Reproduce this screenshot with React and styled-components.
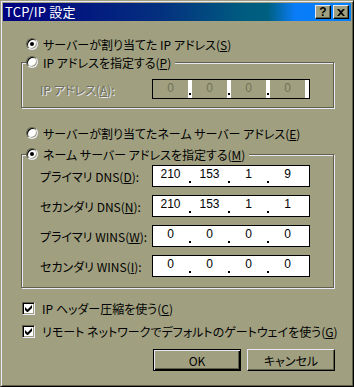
import React from 'react';
import styled, { createGlobalStyle, css } from 'styled-components';

const FACE = '#a0a080';
const LIGHT = '#e8e8f8';
const SHADOW = '#606048';
const DARK = '#000000';

const GlobalStyle = createGlobalStyle`
  html, body { margin: 0; padding: 0; background: ${FACE}; }
  body {
    font-family: "Noto Sans CJK JP", "Liberation Sans", sans-serif;
    font-size: 12px;
    color: #000;
  }
`;

const Window = styled.div`
  box-sizing: border-box;
  width: 354px;
  height: 387px;
  background: ${FACE};
  border: 1px solid;
  border-color: ${FACE} ${DARK} ${DARK} ${FACE};
  padding: 2px;
  box-shadow: inset 1px 1px 0 ${LIGHT}, inset -1px -1px 0 ${SHADOW};
  display: flex;
  flex-direction: column;
  font-feature-settings: "palt";
`;

const TitleBar = styled.div`
  height: 18px;
  flex: none;
  display: flex;
  align-items: center;
  padding: 0 2px 0 2px;
  background: linear-gradient(90deg, #000080 0%, #04307f 45%, #005a80 68%, #006080 76%, #0a7cf8 84%, #0080ff 100%);
`;

const Title = styled.span`
  flex: 1;
  color: #fff;
  font-size: 13px;
  line-height: 18px;
  letter-spacing: 0.2px;
`;

const CaptionButton = styled.span`
  box-sizing: border-box;
  width: 16px;
  height: 14px;
  margin-left: ${p => p.$gap || 0}px;
  background: ${FACE};
  border: 1px solid;
  border-color: ${LIGHT} ${DARK} ${DARK} ${LIGHT};
  box-shadow: inset -1px -1px 0 ${SHADOW};
  display: flex;
  align-items: center;
  justify-content: center;
  font-family: "Liberation Sans", sans-serif;
  font-weight: bold;
  font-size: 12px;
  line-height: 12px;
`;

const Body = styled.div`
  flex: 1;
  display: flex;
  flex-direction: column;
  padding: 0 16px 0 18px;
`;

const OptionRow = styled.label`
  display: flex;
  align-items: center;
  height: 16px;
  gap: ${p => p.$gap || 5}px;
  margin-top: ${p => p.$top || 0}px;
  margin-left: ${p => p.$left || 0}px;
  white-space: nowrap;
`;

const Radio = styled.span`
  box-sizing: border-box;
  position: relative;
  flex: none;
  width: 12px;
  height: 12px;
  border-radius: 50%;
  background: #fff;
  border: 1px solid;
  border-color: ${SHADOW} ${LIGHT} ${LIGHT} ${SHADOW};
  box-shadow: inset 1px 1px 0 ${DARK}, inset -1px -1px 0 ${FACE};
  &::after {
    content: '';
    display: ${p => (p.$checked ? 'block' : 'none')};
    position: absolute;
    left: 3px;
    top: 3px;
    width: 4px;
    height: 4px;
    border-radius: 50%;
    background: #000;
  }
`;

const Checkbox = styled.span`
  box-sizing: border-box;
  flex: none;
  width: 13px;
  height: 13px;
  background: #fff;
  border: 1px solid;
  border-color: ${SHADOW} ${LIGHT} ${LIGHT} ${SHADOW};
  box-shadow: inset 1px 1px 0 ${DARK}, inset -1px -1px 0 ${FACE};
  display: flex;
  align-items: center;
  justify-content: center;
`;

const Group = styled.div`
  box-sizing: border-box;
  position: relative;
  width: 313px;
  height: ${p => p.$height}px;
  margin-top: ${p => p.$top}px;
  border: 1px solid ${SHADOW};
  box-shadow: inset 1px 1px 0 ${LIGHT}, 1px 1px 0 ${LIGHT};
  display: flex;
  flex-direction: column;
  gap: 8px;
  padding: ${p => p.$pad} 0 0 18px;
`;

const Legend = styled.div`
  position: absolute;
  left: 4px;
  top: -9px;
  padding-right: 4px;
  background: ${FACE};
`;

const FieldRow = styled.div`
  display: flex;
  align-items: center;
  height: ${p => p.$h || 22}px;
`;

const FieldLabel = styled.span`
  width: 112px;
  flex: none;
  white-space: nowrap;
  ${p => p.$disabled && css`
    color: #707058;
    text-shadow: 1px 1px 0 ${LIGHT};
  `}
`;

const IPBox = styled.div`
  box-sizing: border-box;
  width: 158px;
  height: 100%;
  border: 1px solid #000;
  background: #fff;
  display: flex;
  padding-right: 4px;
`;

const Octet = styled.span`
  width: 35px;
  flex: none;
  text-align: center;
  line-height: 15px;
  padding-top: 1px;
  background: ${p => (p.$disabled ? FACE : '#fff')};
  color: ${p => (p.$disabled ? '#707058' : '#000')};
  font-family: "Liberation Sans Narrow", "Liberation Sans", sans-serif;
  font-size: 12px;
`;

const Dot = styled.span`
  width: 4px;
  flex: none;
  display: flex;
  align-items: flex-end;
  justify-content: center;
  &::after {
    content: '';
    width: 2px;
    height: 2px;
    margin-bottom: 3px;
    margin-left: -1px;
    background: #000;
  }
`;

const ButtonRow = styled.div`
  display: flex;
  justify-content: flex-end;
  gap: 6px;
  margin-top: 10px;
`;

const Button = styled.button`
  box-sizing: border-box;
  width: 88px;
  height: 22px;
  padding: 0;
  font: inherit;
  color: #000;
  background: ${FACE};
  border: 1px solid;
  border-color: ${LIGHT} ${DARK} ${DARK} ${LIGHT};
  box-shadow: inset -1px -1px 0 ${SHADOW};
  ${p => p.$default && css`
    border-color: #000;
    box-shadow: inset 1px 1px 0 ${LIGHT}, inset -1px -1px 0 ${DARK}, inset -2px -2px 0 ${SHADOW};
  `}
`;

const Mn = ({ children }) => <>(<u>{children}</u>)</>;

const CheckMark = () => (
  <svg width="7" height="7" viewBox="0 0 7 7">
    <path d="M0 2v3l2 2h1l4-4V0L2.5 4.5z" fill="#000" />
  </svg>
);

const CloseGlyph = () => (
  <svg width="8" height="7" viewBox="0 0 8 7">
    <path d="M0 0h2l2 2 2-2h2L5 3.5 8 7H6L4 5 2 7H0l3-3.5z" fill="#000" />
  </svg>
);

function IPAddress({ values, disabled }) {
  return (
    <IPBox>
      {values.map((v, i) => (
        <React.Fragment key={i}>
          {i > 0 && <Dot />}
          <Octet $disabled={disabled}>{v}</Octet>
        </React.Fragment>
      ))}
    </IPBox>
  );
}

const dnsRows = [
  { label: 'プライマリ DNS', key: 'D', values: ['210', '153', '1', '9'] },
  { label: 'セカンダリ DNS', key: 'N', values: ['210', '153', '1', '1'] },
  { label: 'プライマリ WINS', key: 'W', values: ['0', '0', '0', '0'] },
  { label: 'セカンダリ WINS', key: 'I', values: ['0', '0', '0', '0'] },
];

export default function App() {
  return (
    <>
      <GlobalStyle />
      <Window>
        <TitleBar>
          <Title>TCP/IP 設定</Title>
          <CaptionButton>?</CaptionButton>
          <CaptionButton $gap={2}><CloseGlyph /></CaptionButton>
        </TitleBar>
        <Body>
          <OptionRow $top={15} $left={5}>
            <Radio $checked />
            <span>サーバーが割り当てた IP アドレス<Mn>S</Mn></span>
          </OptionRow>

          <Group $top={10} $height={46} $pad="16px">
            <Legend>
              <OptionRow>
                <Radio />
                <span>IP アドレスを指定する<Mn>P</Mn></span>
              </OptionRow>
            </Legend>
            <FieldRow $h={20}>
              <FieldLabel $disabled>IP アドレス<Mn>A</Mn>:</FieldLabel>
              <IPAddress values={['0', '0', '0', '0']} disabled />
            </FieldRow>
          </Group>

          <OptionRow $top={17} $left={5}>
            <Radio />
            <span>サーバーが割り当てたネーム サーバー アドレス<Mn>E</Mn></span>
          </OptionRow>

          <Group $top={13} $height={134} $pad="10px">
            <Legend>
              <OptionRow>
                <Radio $checked />
                <span>ネーム サーバー アドレスを指定する<Mn>M</Mn></span>
              </OptionRow>
            </Legend>
            {dnsRows.map(r => (
              <FieldRow key={r.key}>
                <FieldLabel>{r.label}<Mn>{r.key}</Mn>:</FieldLabel>
                <IPAddress values={r.values} />
              </FieldRow>
            ))}
          </Group>

          <OptionRow $top={12} $left={1} $gap={7}>
            <Checkbox><CheckMark /></Checkbox>
            <span>IP ヘッダー圧縮を使う<Mn>C</Mn></span>
          </OptionRow>
          <OptionRow $top={7} $left={1} $gap={7}>
            <Checkbox><CheckMark /></Checkbox>
            <span>リモート ネットワークでデフォルトのゲートウェイを使う<Mn>G</Mn></span>
          </OptionRow>

          <ButtonRow>
            <Button $default>OK</Button>
            <Button>キャンセル</Button>
          </ButtonRow>
        </Body>
      </Window>
    </>
  );
}
